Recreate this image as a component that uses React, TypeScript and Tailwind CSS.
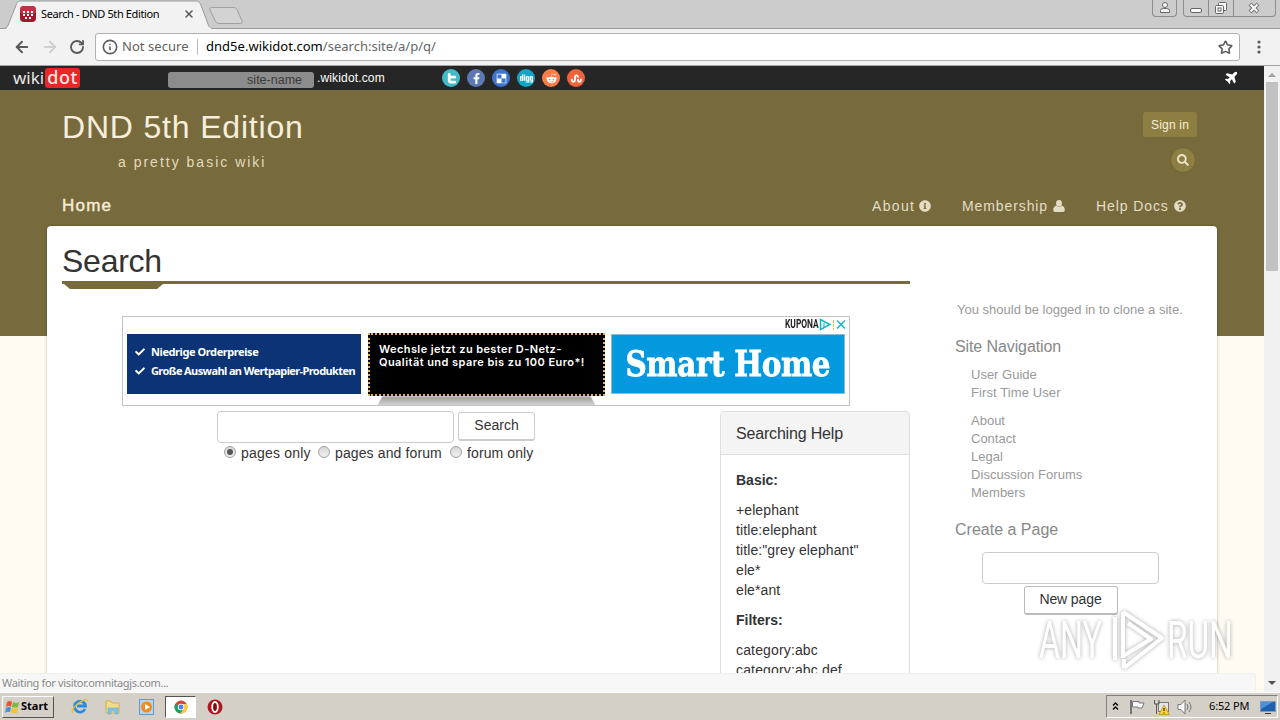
import React from 'react';
import { FaCheck, FaInfoCircle, FaPlane, FaQuestionCircle, FaSearch, FaFacebookF, FaDelicious, FaDigg, FaRedditAlien, FaStumbleupon } from 'react-icons/fa';
import { ArrowLeft, ArrowRight, Info, RotateCw, Star, X } from 'lucide-react';

const TwitterT: React.FC<{ size: number }> = ({ size }) => (
  <svg width={size} height={size} viewBox="0 0 12 12" fill="none" stroke="currentColor" strokeWidth="3" strokeLinecap="round" strokeLinejoin="round">
    <path d="M3.500 1.500V7.500Q3.500 10 6 10H9.500M3.500 4.500H9.500" />
  </svg>
);

const UserIcon: React.FC = () => (
  <svg width="12" height="12" viewBox="0 0 12 12" fill="currentColor" className="ml-[5px]">
    <ellipse cx="6" cy="3.200" rx="2.900" ry="3.200" />
    <path d="M3.200 5.500Q6 8 8.800 5.500Q11.800 6.500 11.800 10Q11.800 12 10 12H2Q.2 12 .2 10Q.2 6.500 3.200 5.500Z" />
  </svg>
);

const socials = [
  { icon: TwitterT, style: 'bg-[#43bcc9]' },
  { icon: FaFacebookF, style: 'bg-[#5d78b2]' },
  { icon: FaDelicious, style: 'bg-[#3f74cf]' },
  { icon: FaDigg, style: 'bg-[#13a5c8]' },
  { icon: FaRedditAlien, style: 'bg-[#fb7d4b]' },
  { icon: FaStumbleupon, style: 'bg-[#f2623c]' },
];

const TabStrip: React.FC = () => (
  <div className="relative h-[29px] bg-[#cccccc] border-b border-[#9b9b9b] flex justify-between">
    <svg width="260" height="29" className="absolute left-0 top-0">
      <path d="M0 28.500H4C7 28 8 26 9 23L16.500 4C17.500 1.500 19 1 21 1H196C198 1 199.500 2 200.500 4L208 24C209 27 210 28.500 214 28.500H260" fill="#f2f2f2" stroke="#9b9b9b" />
      <path d="M7 28.500H211" stroke="#f2f2f2" strokeWidth="1.500" />
      <path d="M211.500 7.500H234Q236 7.500 237 9.500L242 21Q243 23.500 240.500 23.500H219Q216.500 23.500 215.500 21.500L210 10Q209 7.500 211.500 7.500Z" fill="#d3d3d3" stroke="#a0a0a0" />
    </svg>
    <div className="relative flex items-center pl-5 h-[28px]">
      <svg width="16" height="16" className="shrink-0">
        <rect width="16" height="16" rx="4" fill="#a3182b" />
        <rect width="16" height="8" rx="4" fill="#bf3546" />
        <path d="M3 5h2v2H3zM7 5h2v2H7zM11 5h2v2h-2zM3 8h2v2H3zM7 8h2v2H7zM11 8h2v2h-2zM5 11h2v2H5zM9 11h2v2H9z" fill="#fff" />
      </svg>
      <span className="ml-[5px] w-[142px] text-[11px] text-black whitespace-nowrap font-['Noto_Sans',sans-serif] tracking-[-0.38px]">Search - DND 5th Edition</span>
      <X size={12} strokeWidth={3} className="text-[#555]" />
    </div>
    <div className="flex items-start pr-1">
      <div className="w-[25px] h-[17px] mr-1.5 border border-t-0 border-[#8c8c8c] rounded-b-[4px] flex justify-center">
        <svg width="12" height="14" fill="#f6f6f6" stroke="#666"><circle cx="6" cy="5" r="2.500" /><path d="M1.500 12.500v-2q0-2 3-2h3q3 0 3 2v2z" /></svg>
      </div>
      <div className="w-[93px] h-[17px] border border-t-0 border-[#8c8c8c] rounded-b-[4px] flex">
        <div className="w-[25px] border-r border-[#8c8c8c]">
          <svg width="24" height="16"><rect x="6.500" y="8.500" width="11" height="4" rx="1.500" fill="#f8f8f8" stroke="#666" /></svg>
        </div>
        <div className="w-[25px] border-r border-[#8c8c8c]">
          <svg width="24" height="16" fill="#f8f8f8" stroke="#666"><rect x="9.500" y="2.500" width="8" height="8" rx="1" /><rect x="6.500" y="5.500" width="8" height="8" rx="1" /><rect x="9" y="8" width="3" height="3" /></svg>
        </div>
        <svg width="41" height="16"><path d="M16 4L24 12M24 4L16 12" stroke="#777" strokeWidth="4" /><path d="M16.500 4.500L23.500 11.500M23.500 4.500L16.500 11.500" stroke="#fafafa" strokeWidth="2" /></svg>
      </div>
    </div>
  </div>
);

const Toolbar: React.FC = () => (
  <div className="h-[37px] bg-[#f2f2f2] border-b border-[#a3a3a3] flex items-center pl-[13px]">
    <ArrowLeft size={18} strokeWidth={2.6} className="text-[#5a5a5a] mr-2.5" />
    <ArrowRight size={18} strokeWidth={2.6} className="text-[#d0d0d0] mr-2.5" />
    <RotateCw size={16} strokeWidth={2.8} className="text-[#5a5a5a] mr-2.5" />
    <div className="w-[1145px] h-[28px] bg-white border border-[#b0b0b0] rounded-[3px] flex items-center px-1.5 font-['Noto_Sans',sans-serif] text-[13px] whitespace-nowrap">
      <Info size={16} strokeWidth={2.4} className="text-[#5a5a5a] shrink-0" />
      <span className="ml-1 w-[75px] text-[#5f5f5f] tracking-[0.05px]">Not secure</span>
      <span className="w-px h-4 bg-[#bbb] mr-[8px]" />
      <span className="grow text-black tracking-[0.02px]">dnd5e.wikidot.com<span className="text-[#666]">/search:site/a/p/q/</span></span>
      <Star size={15} strokeWidth={2.5} className="text-[#5a5a5a]" />
    </div>
    <svg width="4" height="16" className="ml-[17px]" fill="#5a5a5a"><circle cx="2" cy="3" r="1.600" /><circle cx="2" cy="8" r="1.600" /><circle cx="2" cy="13" r="1.600" /></svg>
  </div>
);

const WikidotBar: React.FC = () => (
  <div className="h-6 bg-[#262626] flex items-center pl-[13px]">
    <div className="flex items-center w-[155px] font-['Noto_Sans',sans-serif]">
      <span className="text-[17px] leading-5 w-[32px] text-[#e6e6e6]">wiki</span>
      <span className="w-[35px] h-5 rounded-[3px] bg-[#ee2429] text-[#ffe9e6] text-[18px] leading-[19px] text-center font-medium tracking-[0.5px]">dot</span>
    </div>
    <div className="w-[146px] h-4 mt-[4px] rounded-[3px] bg-[#8c8c8c] text-[#3b3b3b] text-[12.5px] leading-4 text-right pr-3">site-name</div>
    <span className="ml-[3px] w-[125px] text-[12px] leading-4 tracking-[0.15px] text-white">.wikidot.com</span>
    <div className="flex gap-[7px]">
      {socials.map(({ icon: Icon, style }, i) => (
        <span key={i} className={`w-[18px] h-[18px] rounded-full flex items-center justify-center text-white ${style}`}>
          <Icon size={i === 3 ? 13 : 11} />
        </span>
      ))}
    </div>
    <FaPlane size={14} className="text-white ml-auto mr-[25px] mb-0.5 -rotate-45" />
  </div>
);

const SiteHeader: React.FC = () => (
  <header className="h-[136px] pl-[62px] pr-[67px] text-[#f7eedb]">
    <div className="flex justify-between h-[100px]">
      <div className="pt-[19px]">
        <h1 className="text-[32px] leading-9 tracking-[0.820px]">DND 5th Edition</h1>
        <p className="mt-[7px] ml-14 text-[14px] leading-5 tracking-[2px] text-[#e2dabb]">a pretty basic wiki</p>
      </div>
      <div className="flex flex-col items-end pt-[22px]">
        <button className="w-[54px] h-[25px] rounded-[3px] bg-[#8d7f42] text-[12px] tracking-[0.2px]">Sign in</button>
        <button className="w-[26px] h-[26px] mt-[10px] mr-px rounded-full bg-[#8d7f42] border border-[#6f6237] flex items-center justify-center">
          <FaSearch size={12} className="text-[#ebe3ca]" />
        </button>
      </div>
    </div>
    <nav className="flex items-center h-8 text-[14px] tracking-[0.9px] text-[#e4dcc3]">
      <a className="text-[17px] tracking-[1.200px] text-[#f7eedb] mr-auto [-webkit-text-stroke:0.4px_#f7eedb]">Home</a>
      <a className="flex items-center w-[90px] tracking-[1.350px]">About<FaInfoCircle size={12} className="ml-[4px]" /></a>
      <a className="flex items-center w-[134px]">Membership<UserIcon /></a>
      <a className="flex items-center w-[101px]">Help Docs<FaQuestionCircle size={12} className="ml-[5px]" /></a>
    </nav>
  </header>
);

const AdBanner: React.FC = () => (
  <div className="w-[728px] h-[90px] ml-[60px] border border-[#c2c2c2] bg-white overflow-hidden">
    <div className="flex justify-end items-center h-[15px] pr-[2px]">
      <div className="w-[34px] overflow-visible"><span className="block w-[50px] origin-left scale-x-[0.7] font-['Roboto',sans-serif] font-bold text-[12px] leading-[15px] text-[#222]">KUPONA</span></div>
      <svg width="28" height="13"><path d="M1.500 1.500V11.500L11 6.500Z" fill="#e8fafc" stroke="#18b4c4" strokeWidth="1.500" /><path d="M5 5v4" stroke="#18b4c4" /><path d="M14.500 2v10" stroke="#e8b44a" strokeDasharray="3 1" /><path d="M18 2.500L26 10.500M26 2.500L18 10.500" stroke="#18b4c4" strokeWidth="1.500" /></svg>
    </div>
    <div className="flex px-1">
      <div className="w-[234px] h-[60px] mt-[2px] pl-2 pt-[8px] bg-[#0b3376] text-white font-['Noto_Sans',sans-serif] font-bold text-[11px] leading-[19px] whitespace-nowrap">
        <p className="flex items-center tracking-[-0.42px]"><FaCheck size={10} className="mr-[6px]" />Niedrige Orderpreise</p>
        <p className="flex items-center tracking-[-0.6px]"><FaCheck size={10} className="mr-[6px]" />Große Auswahl an Wertpapier-Produkten</p>
      </div>
      <div className="w-[237px] ml-[7px]">
        <div className="h-[63px] mt-px pl-[9px] pt-[8px] bg-black border-2 border-dotted border-[#dfb44f] text-white font-['Inter',sans-serif] font-semibold text-[11px] leading-[13px] whitespace-nowrap">
          <p className="tracking-[0.4px]">Wechsle jetzt zu bester D-Netz-</p>
          <p className="tracking-[0.44px]">Qualität und spare bis zu 100 Euro*!</p>
        </div>
        <div className="h-3 mx-2 bg-[linear-gradient(#999,#ddd_90%)] [clip-path:polygon(3%_0,97%_0,100%_100%,0_100%)] blur-[1px]" />
      </div>
      <div className="w-[234px] h-[60px] mt-[2px] ml-[6px] bg-[#0498de] border border-[#8bbcd5] text-white font-['DejaVu_Serif',serif] font-bold text-[36px] leading-[57px] flex justify-center whitespace-nowrap [-webkit-text-stroke:0.8px_#fff]">
        <span className="block scale-x-[0.82] tracking-[-0.5px]">Smart Home</span>
      </div>
    </div>
  </div>
);

const Radio: React.FC<{ label: string; checked?: boolean; className: string }> = ({ label, checked, className }) => (
  <label className={`flex items-center shrink-0 ${className}`}>
    <span className="w-3 h-3 mr-[5px] mb-0.5 rounded-full border border-[#a0a0a0] bg-[linear-gradient(#d8d8d8,#f0f0f0)] flex items-center justify-center">
      {checked && <span className="w-1.5 h-1.5 rounded-full bg-[#555]" />}
    </span>
    {label}
  </label>
);

const SearchForm: React.FC = () => (
  <form className="w-[318px] ml-[155px] text-[14px] leading-5">
    <div className="flex">
      <input className="w-[237px] h-8 border border-[#ccc] rounded-[4px] bg-white" />
      <button type="button" className="w-[77px] h-[29px] ml-1 mt-px pb-0.5 border border-b-2 border-[#ccc] rounded-[3px] bg-white">Search</button>
    </div>
    <div className="flex ml-[7px] whitespace-nowrap">
      <Radio label="pages only" checked className="w-[94px] tracking-[0.2px]" />
      <Radio label="pages and forum" className="w-[132px] tracking-[0.12px]" />
      <Radio label="forum only" className="w-[90px] tracking-[0.1px]" />
    </div>
  </form>
);

const SearchingHelp: React.FC = () => (
  <section className="w-[190px] h-[420px] border border-[#ddd] rounded-t-[4px] text-[14px] leading-5">
    <h3 className="h-[43px] pl-[15px] bg-[#f4f4f4] border-b border-[#ddd] rounded-t-[4px] text-[16px] leading-[44px] tracking-[-0.18px]">Searching Help</h3>
    <div className="pl-[15px] pt-[15px] flex flex-col gap-[10px]">
      <strong>Basic:</strong>
      <p className="tracking-[0.1px]">+elephant<br />title:elephant<br />title:"grey elephant"<br />ele*<br />ele*ant</p>
      <strong>Filters:</strong>
      <p className="tracking-[0.15px]">category:abc<br />category:abc,def</p>
    </div>
  </section>
);

const Sidebar: React.FC = () => (
  <aside className="ml-[45px] w-[247px] pt-[75px] text-[13px] leading-[18px] text-[#999]">
    <p className="ml-[2px] whitespace-nowrap">You should be logged in to clone a site.</p>
    <h3 className="mt-[18px] text-[16px] leading-5 tracking-[-0.1px] text-[#888]">Site Navigation</h3>
    <ul className="mt-[9px] ml-4">
      <li>User Guide</li>
      <li className="tracking-[0.1px]">First Time User</li>
      <li className="mt-[10px]">About</li>
      <li>Contact</li>
      <li>Legal</li>
      <li className="tracking-[0.05px]">Discussion Forums</li>
      <li>Members</li>
    </ul>
    <h3 className="mt-[18px] text-[16px] leading-5 text-[#888]">Create a Page</h3>
    <div className="mt-[12px] w-[231px] flex flex-col items-center">
      <input className="w-[177px] h-8 border border-[#ccc] rounded-[4px] bg-white" />
      <button className="w-[94px] h-[29px] mt-[2px] pb-0.5 border border-b-2 border-[#bbb] rounded-[3px] bg-white text-[14px] tracking-[-0.1px] text-[#333]">New page</button>
    </div>
  </aside>
);

const Watermark: React.FC = () => (
  <div className="absolute left-[1039px] top-[608px] w-[200px] h-[66px] flex items-center text-white font-['Roboto',sans-serif] text-[52px] leading-[66px] opacity-85 drop-shadow-[0_0_2px_rgba(0,0,0,0.4)]">
    <div className="w-[70px]"><span className="block w-[100px] origin-left scale-x-[0.62]">ANY</span></div>
    <svg width="58" height="66" fill="none" stroke="currentColor" strokeWidth="4">
      <path d="M14 4V50M14 4L53 30L15 60M6 9V52M14 48L42 31L19 15M15 60V51" strokeLinejoin="round" />
    </svg>
    <div className="w-[66px]"><span className="block w-[100px] origin-left scale-x-[0.64]">RUN</span></div>
  </div>
);

const Scrollbar: React.FC = () => (
  <div className="w-4 bg-[#f1f1f1] flex flex-col items-center">
    <svg width="16" height="16"><path d="M4 11L8 7L12 11Z" fill="#a0a0a0" /></svg>
    <div className="w-3 h-[189px] bg-[#c1c1c1]" />
    <svg width="16" height="16" className="mt-auto"><path d="M4 5L8 9L12 5Z" fill="#505050" /></svg>
  </div>
);

const Taskbar: React.FC = () => (
  <div className="h-[28px] bg-[#d4d0c8] border-t border-[#fff] flex items-center pl-[2px] pr-0.5 font-['Noto_Sans',sans-serif] text-[11px] text-black">
    <button className="w-[52px] h-[22px] mr-[17px] pl-px border border-t-white border-l-white border-r-[#555] border-b-[#555] flex items-center font-bold">
      <svg width="17" height="16" className="shrink-0">
        <path d="M3 3Q6 1 8 3L7 8Q5 6 2 8Z" fill="#e8542c" /><path d="M9 3Q12 5 15 3L14 8Q11 9 8 8Z" fill="#7cb83c" />
        <path d="M2 9Q5 7 7 9L6 13Q3 12 1 14Z" fill="#4a8ed8" /><path d="M8 9Q11 10 14 9L13 14Q10 15 7 13Z" fill="#f5c32c" />
      </svg>
      Start
    </button>
    <svg width="18" height="18" className="mr-[15px]">
      <path d="M14 11A5.500 5.500 0 1 1 14.500 8H6" fill="none" stroke="#238be0" strokeWidth="2.800" />
      <path d="M2 15C-1 13 5 6 11 3Q16 0 16.500 3" fill="none" stroke="#e8bd3c" strokeWidth="1.500" />
    </svg>
    <svg width="18" height="18" className="mr-[16px]">
      <path d="M2 3H7L8 5H15V15H2Z" fill="#f2dc86" stroke="#cdb050" /><path d="M4 16V10H14V16H11V13H7V16Z" fill="#80c4e8" stroke="#5aa0cc" strokeWidth=".5" />
    </svg>
    <svg width="18" height="18" className="mr-[9px]">
      <rect x="1.500" y="1.500" width="14" height="15" fill="#b5d5ef" stroke="#5d9dd5" /><circle cx="8.500" cy="9" r="5.500" fill="#f58a1e" /><path d="M7 6L12 9L7 12Z" fill="#fff" />
    </svg>
    <div className="w-[31px] h-[22px] mr-[11px] bg-white border border-t-[#555] border-l-[#555] border-r-white border-b-white flex items-center justify-center">
      <svg width="14" height="14" viewBox="0 0 14 14">
        <circle cx="7" cy="7" r="6.500" fill="#db4437" /><path d="M7 7L1.400 3.700A6.500 6.500 0 0 0 6.500 13.500L9.800 8.600Z" fill="#1da261" /><path d="M7 7L9.800 8.600L6.500 13.500A6.500 6.500 0 0 0 12.700 4H7Z" fill="#ffcd40" />
        <circle cx="7" cy="7" r="3.200" fill="#fff" /><circle cx="7" cy="7" r="2.400" fill="#4285f4" />
      </svg>
    </div>
    <svg width="16" height="16"><circle cx="8" cy="8" r="7.500" fill="#b0161c" /><ellipse cx="8" cy="8" rx="2.800" ry="5" fill="#7d0b10" stroke="#fff" strokeWidth="1.800" /></svg>
    <div className="ml-auto w-[172px] h-[23px] border border-t-[#808080] border-l-[#808080] border-r-white border-b-white flex items-center">
      <svg width="18" height="20" fill="none" stroke="#000" strokeWidth="1.300"><path d="M6 8.500L8.500 6L11 8.500M6 12.500L8.500 10L11 12.500" /></svg>
      <svg width="17" height="18" className="ml-[4px]"><path d="M2 2V16" stroke="#777" strokeWidth="2" /><path d="M3.500 3.500H10V5H15L13 10H9V9H3.500Z" fill="#fff" stroke="#777" /></svg>
      <svg width="17" height="18" className="ml-[7px]">
        <rect x="5.500" y="4.500" width="10" height="9" fill="#e3e6e8" stroke="#777" /><path d="M1.500 2V6H6V2M3.500 6V16" fill="none" stroke="#555" /><path d="M11 7L16.500 16.500H6Z" fill="#ffd42e" stroke="#b18b00" strokeWidth=".7" /><path d="M11 10V13M11 14.500V15.500" stroke="#000" />
      </svg>
      <svg width="18" height="18" className="ml-[6px]" fill="none" stroke="#777"><path d="M2 6.500H5L9 2V16L5 11.500H2Z" fill="#fff" /><path d="M11 6Q13 9 11 12M13 4Q17 9 13 14" /></svg>
      <span className="ml-[15px] w-[51px] whitespace-nowrap tracking-[-0.15px]">6:52 PM</span>
      <svg width="16" height="16"><rect x=".5" y="2.500" width="15" height="10" fill="#1e5fae" stroke="#7e9dbd" /><path d="M1 3H13L1 10Z" fill="#4b91dc" /><path d="M5 14.500H11" stroke="#333" /></svg>
    </div>
  </div>
);

const App: React.FC = () => (
  <div className="relative w-[1280px] h-[720px] overflow-hidden flex flex-col bg-[#d4d0c8] font-['Liberation_Sans',Arial,sans-serif] text-[#333]">
    <TabStrip />
    <Toolbar />
    <div className="flex h-[626px] overflow-hidden">
      <div className="w-[1264px] overflow-hidden bg-[linear-gradient(#776b3d_270px,#fffbf2_270px)]">
        <WikidotBar />
        <SiteHeader />
        <main className="w-[1170px] h-[500px] ml-[47px] pl-[15px] flex bg-white rounded-t-[4px] shadow-[0_0_3px_rgba(0,0,0,0.3)]">
          <div className="w-[848px]">
            <h2 className="h-[58px] pt-[16px] border-b-[3px] border-[#776b3d] text-[32px] leading-[38px] tracking-[-0.25px]">Search</h2>
            <div className="w-[101px] h-[5px] bg-[#776b3d] [clip-path:polygon(2px_0,101px_0,95px_100%,8px_100%)]" />
            <div className="mt-[27px]"><AdBanner /></div>
            <div className="flex justify-between mt-[5px]">
              <SearchForm />
              <SearchingHelp />
            </div>
          </div>
          <Sidebar />
        </main>
      </div>
      <Scrollbar />
    </div>
    <Watermark />
    <div className="absolute left-0 top-[673px] w-[1256px] h-[19px] bg-[#f7f7f7] border-t border-r border-[#f0f0f0] rounded-tr-[3px] pl-[2px] font-['Noto_Sans',sans-serif] text-[11px] leading-[18px] tracking-[-0.34px] text-[#888]">Waiting for visitor.omnitagjs.com...</div>
    <Taskbar />
  </div>
);

export default App;
